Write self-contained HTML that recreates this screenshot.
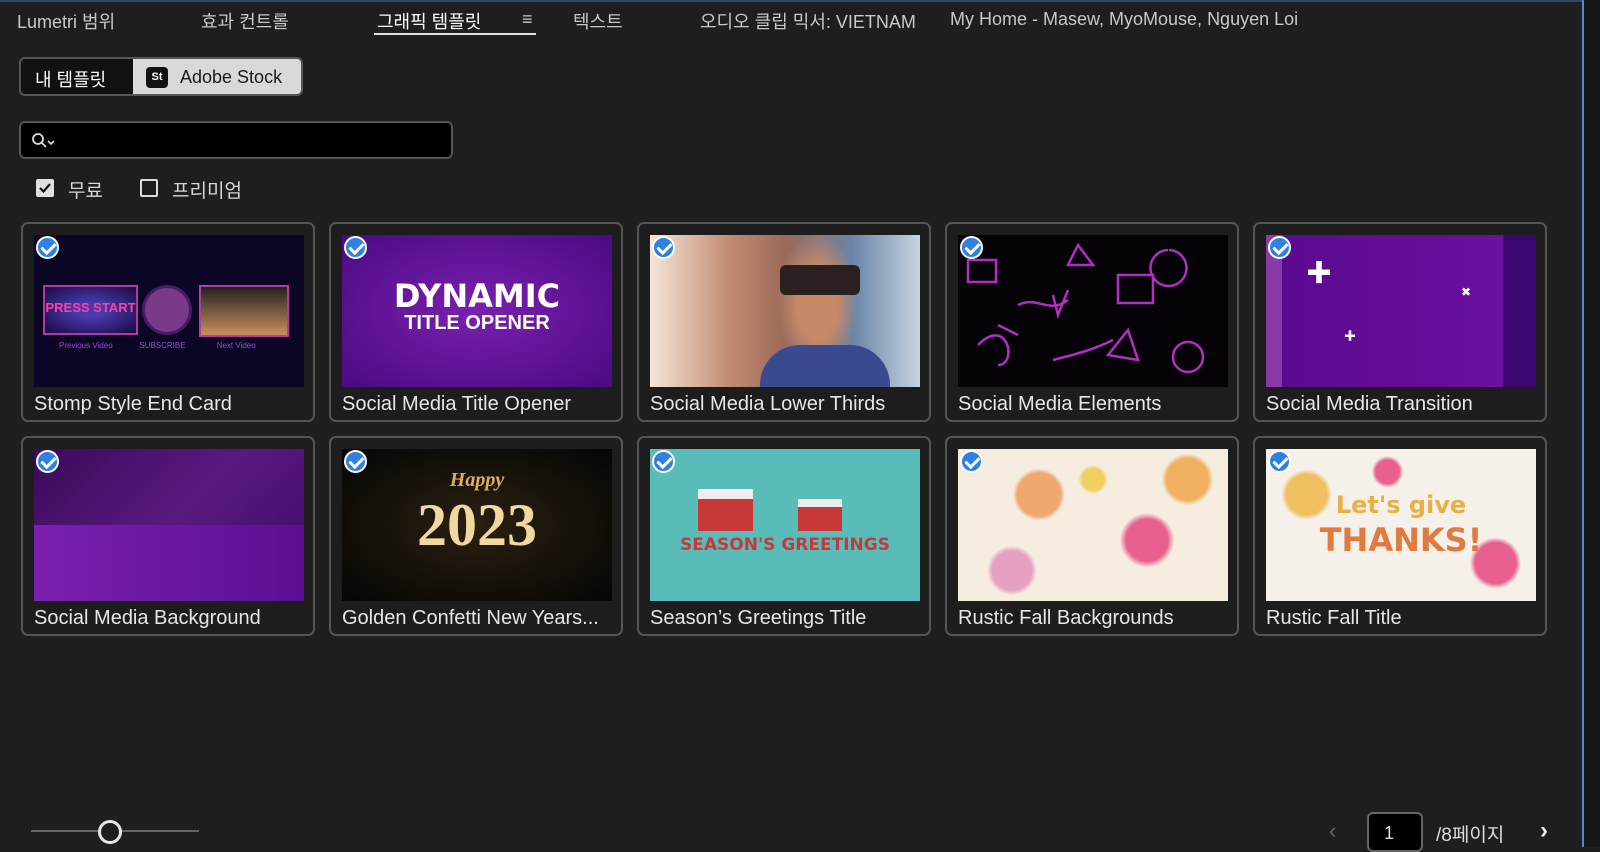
<!DOCTYPE html>
<html><head><meta charset="utf-8"><style>
*{box-sizing:border-box;margin:0;padding:0}
body{width:1600px;height:847px;background:#1e1e1e;font-family:"Liberation Sans","Noto Sans CJK KR",sans-serif;color:#d6d6d6;position:relative;overflow:hidden}
.a{position:absolute;white-space:nowrap}
.tab{font-size:18px;top:8px;color:#c8c8c8}
.card{position:absolute;width:294px;height:200px;border:2px solid #555;border-radius:7px;background:#1d1d1d}
.th{position:absolute;left:11px;top:11px;width:270px;height:152px;overflow:hidden}
.lb{position:absolute;left:11px;top:169px;font-size:20px;color:#e6e6e6;white-space:nowrap}
.ck{position:absolute;left:13px;top:12px;width:23px;height:23px;border-radius:50%;background:#2f80e0;border:2px solid #fff;z-index:2}
.ck:after{content:"";position:absolute;left:6px;top:2px;width:6px;height:11px;border:solid #fff;border-width:0 3px 3px 0;transform:rotate(45deg)}
.tt{position:absolute;width:100%;text-align:center;font-weight:bold}
</style></head><body>
<div style="position:absolute;left:0;top:0;width:1600px;height:2px;background:#2a4a70"></div>
<div style="position:absolute;left:1582px;top:0;width:2px;height:847px;background:#4a8ad8"></div>
<div style="position:absolute;left:1584px;top:0;width:16px;height:847px;background:#161616"></div>
<div class="a tab" style="left:17px">Lumetri 범위</div>
<div class="a tab" style="left:201px">효과 컨트롤</div>
<div class="a tab" style="left:377px;color:#fff">그래픽 템플릿</div>
<div class="a tab" style="left:522px;top:9px">≡</div>
<div style="position:absolute;left:374px;top:33px;width:162px;height:2px;background:#e0e0e0"></div>
<div class="a tab" style="left:573px">텍스트</div>
<div class="a tab" style="left:700px">오디오 클립 믹서: VIETNAM</div>
<div class="a tab" style="left:950px;top:9px">My Home - Masew, MyoMouse, Nguyen Loi</div>

<div style="position:absolute;left:19px;top:57px;width:284px;height:39px;border:2px solid #555;border-radius:6px;background:#111;overflow:hidden">
<div class="a" style="left:14px;top:7px;font-size:18px;color:#fff">내 템플릿</div>
<div style="position:absolute;left:112px;top:0;width:172px;height:37px;background:#d9d9d9">
<div style="position:absolute;left:13px;top:8px;width:22px;height:21px;background:#111;border-radius:4px;color:#fff;font-size:11px;font-weight:bold;text-align:center;line-height:21px">St</div>
<div class="a" style="left:47px;top:8px;font-size:18px;color:#1a1a1a">Adobe Stock</div></div></div>

<div style="position:absolute;left:19px;top:121px;width:434px;height:38px;border:2px solid #555;border-radius:6px;background:#000">
<svg style="position:absolute;left:10px;top:9px" width="26" height="18"><circle cx="7" cy="7" r="5" stroke="#ddd" stroke-width="1.8" fill="none"/><path d="M11 11l4 4M17 9l3 3 3-3" stroke="#ddd" stroke-width="1.6" fill="none"/></svg></div>

<div style="position:absolute;left:36px;top:179px;width:18px;height:18px;background:#e0e0e0;border-radius:2px"><svg width="18" height="18"><path d="M4 9l3.5 3.5L14 5" stroke="#111" stroke-width="2.2" fill="none"/></svg></div>
<div class="a" style="left:68px;top:176px;font-size:19px">무료</div>
<div style="position:absolute;left:140px;top:179px;width:18px;height:18px;border:2px solid #ddd;border-radius:2px"></div>
<div class="a" style="left:172px;top:176px;font-size:19px">프리미엄</div>

<!-- row1 -->
<div class="card" style="left:21px;top:222px"><div class="ck"></div><div class="th" style="background:#0c0626">
<div style="position:absolute;left:9px;top:50px;width:95px;height:50px;border:2px solid #b03aa0;background:radial-gradient(#4a3ab0 20%,#1a0a40)"></div>
<div class="tt" style="left:10px;top:65px;width:93px;color:#ff40a0;font-size:13px">PRESS START</div>
<div style="position:absolute;left:108px;top:50px;width:50px;height:50px;border-radius:50%;background:#7a3a8a;border:3px solid #4a1a6a"></div>
<div style="position:absolute;left:165px;top:50px;width:90px;height:52px;border:2px solid #b03aa0;background:linear-gradient(#222,#c8905a)"></div>
<div class="a" style="left:25px;top:106px;font-size:8px;color:#9a4ad0">Previous Video &nbsp;&nbsp;&nbsp;&nbsp;&nbsp;&nbsp;&nbsp;&nbsp;&nbsp;&nbsp;&nbsp;SUBSCRIBE &nbsp;&nbsp;&nbsp;&nbsp;&nbsp;&nbsp;&nbsp;&nbsp;&nbsp;&nbsp;&nbsp;&nbsp;&nbsp;Next Video</div></div>
<div class="lb">Stomp Style End Card</div></div>

<div class="card" style="left:329px;top:222px"><div class="ck"></div><div class="th" style="background:radial-gradient(ellipse at 50% 50%,#7a20b0,#4a0a80)">
<div class="tt" style="top:42px;font-size:32px;color:#fff;font-family:'DejaVu Sans',sans-serif">DYNAMIC</div>
<div class="tt" style="top:77px;font-size:20px;color:#fff">TITLE OPENER</div></div>
<div class="lb">Social Media Title Opener</div></div>

<div class="card" style="left:637px;top:222px"><div class="ck"></div><div class="th" style="background:linear-gradient(90deg,#f5e6d8 0%,#c08a70 30%,#9a6a5a 50%,#6a84a8 75%,#c8d4e0 100%)">
<div style="position:absolute;left:120px;top:0;width:95px;height:152px;background:radial-gradient(ellipse at 50% 45%,#c78a68 30%,transparent 60%)"></div>
<div style="position:absolute;left:130px;top:30px;width:80px;height:30px;background:#2a2020;border-radius:6px"></div>
<div style="position:absolute;left:110px;top:110px;width:130px;height:42px;background:#3a4a90;border-radius:40px 40px 0 0"></div></div>
<div class="lb">Social Media Lower Thirds</div></div>

<div class="card" style="left:945px;top:222px"><div class="ck"></div><div class="th" style="background:#050208">
<svg width="270" height="152" fill="none" stroke="#b030c0" stroke-width="2.5"><rect x="10" y="25" width="28" height="22"/><path d="M120 10l15 20-25 0z M160 40h35v28h-35z M60 70c20-10 30 10 50-5 M20 110c30-30 40 20 20 20 M150 120l20-25 10 30z M95 125c20-5 40-10 60-20 M210 15a18 18 0 1 0 1 0"/><circle cx="230" cy="122" r="15"/><path d="M95 60l5 20 10-25 M40 90l20 10"/></svg></div>
<div class="lb">Social Media Elements</div></div>

<div class="card" style="left:1253px;top:222px"><div class="ck"></div><div class="th" style="background:linear-gradient(90deg,#8a3aa8 0 16px,#5a0a90 16px,#6a10a0 88%,#3a0670 88%)">
<div class="a" style="left:40px;top:18px;font-size:26px;color:#fff">✚</div>
<div class="a" style="left:195px;top:50px;font-size:12px;color:#fff">✖</div>
<div class="a" style="left:78px;top:92px;font-size:12px;color:#fff">✚</div></div>
<div class="lb">Social Media Transition</div></div>

<!-- row2 -->
<div class="card" style="left:21px;top:436px"><div class="ck"></div><div class="th" style="background:linear-gradient(135deg,#3a0a5a,#5a1a80 50%,#3a0868)">
<div style="position:absolute;left:0;top:76px;width:270px;height:76px;background:linear-gradient(90deg,#7a20b0,#5a1090)"></div></div>
<div class="lb">Social Media Background</div></div>

<div class="card" style="left:329px;top:436px"><div class="ck"></div><div class="th" style="background:radial-gradient(#2a2010,#050505)">
<div class="tt" style="top:20px;font-size:20px;color:#d8b060;font-style:italic;font-family:'Liberation Serif',serif">Happy</div>
<div class="tt" style="top:42px;font-size:60px;color:#f0d8a0;font-family:'Liberation Serif',serif">2023</div></div>
<div class="lb">Golden Confetti New Years...</div></div>

<div class="card" style="left:637px;top:436px"><div class="ck"></div><div class="th" style="background:#5abcb8">
<div style="position:absolute;left:48px;top:40px;width:55px;height:42px;background:#c83838;border-top:10px solid #eee"></div>
<div style="position:absolute;left:148px;top:50px;width:44px;height:32px;background:#c83838;border-top:8px solid #eee"></div>
<div class="tt" style="top:86px;font-size:17px;color:#c83838;font-family:'DejaVu Sans',sans-serif">SEASON'S GREETINGS</div></div>
<div class="lb">Season’s Greetings Title</div></div>

<div class="card" style="left:945px;top:436px"><div class="ck"></div><div class="th" style="background:radial-gradient(circle at 30% 30%,#f0a870 10%,transparent 12%),radial-gradient(circle at 70% 60%,#e86090 10%,transparent 13%),radial-gradient(circle at 20% 80%,#e8a0c0 8%,transparent 10%),radial-gradient(circle at 85% 20%,#f0b060 8%,transparent 10%),radial-gradient(circle at 50% 20%,#f0d060 6%,transparent 8%),#f5ede0"></div>
<div class="lb">Rustic Fall Backgrounds</div></div>

<div class="card" style="left:1253px;top:436px"><div class="ck"></div><div class="th" style="background:radial-gradient(circle at 15% 30%,#f0c060 8%,transparent 10%),radial-gradient(circle at 85% 75%,#e86090 8%,transparent 10%),radial-gradient(circle at 45% 15%,#e86090 6%,transparent 8%),#f5f0ea">
<div class="tt" style="top:42px;font-size:24px;color:#e8b040;font-family:'DejaVu Sans',sans-serif">Let's give</div>
<div class="tt" style="top:72px;font-size:32px;color:#e07a40;font-family:'DejaVu Sans',sans-serif">THANKS!</div></div>
<div class="lb">Rustic Fall Title</div></div>

<!-- bottom -->
<div style="position:absolute;left:31px;top:830px;width:168px;height:2px;background:#666"></div>
<div style="position:absolute;left:98px;top:820px;width:24px;height:24px;border-radius:50%;border:3px solid #e6e6e6;background:#1e1e1e"></div>
<div class="a" style="left:1329px;top:818px;font-size:22px;color:#666">‹</div>
<div style="position:absolute;left:1367px;top:812px;width:56px;height:40px;border:2px solid #666;border-radius:6px;background:#000"><div class="a" style="left:15px;top:9px;font-size:18px;color:#ddd">1</div></div>
<div class="a" style="left:1436px;top:820px;font-size:19px;color:#ddd">/8페이지</div>
<div class="a" style="left:1540px;top:817px;font-size:24px;color:#eee;font-weight:bold">›</div>
</body></html>
